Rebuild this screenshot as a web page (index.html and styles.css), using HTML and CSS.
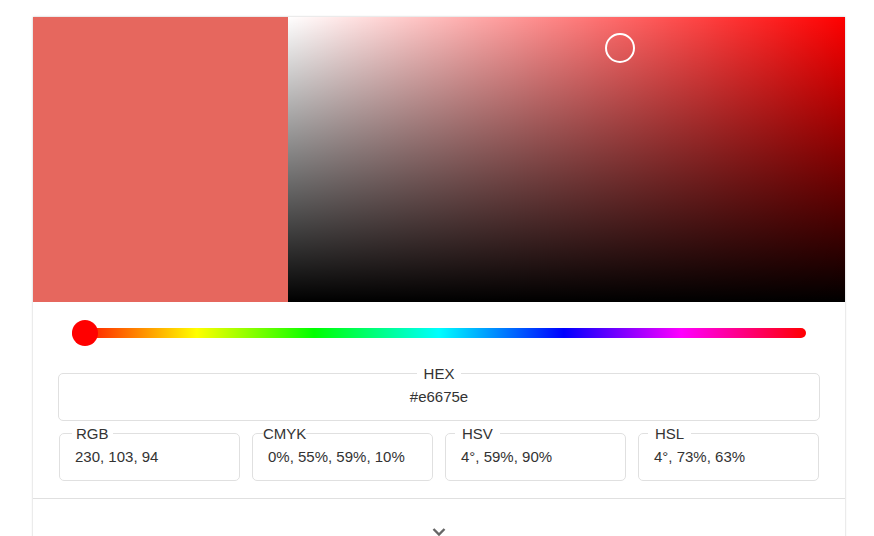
FILE: index.html
```html
<!DOCTYPE html>
<html lang="en">
<head>
    <meta charset="UTF-8">
    <meta name="viewport" content="width=device-width, initial-scale=1.0">
    <title>Color Picker</title>
    <link rel="stylesheet" href="styles.css">
</head>
<body>
    <div class="picker">
        <div class="picker-top">
            <div class="swatch"></div>
            <div class="sv-area">
                <span class="sv-cursor"></span>
            </div>
        </div>

        <div class="hue-row">
            <div class="hue-track">
                <span class="hue-thumb"></span>
            </div>
        </div>

        <div class="fields">
            <fieldset class="field field-hex">
                <legend>HEX</legend>
                <div class="field-value">#e6675e</div>
            </fieldset>

            <div class="field-row">
                <fieldset class="field">
                    <legend>RGB</legend>
                    <div class="field-value">230, 103, 94</div>
                </fieldset>
                <fieldset class="field">
                    <legend class="tight">CMYK</legend>
                    <div class="field-value">0%, 55%, 59%, 10%</div>
                </fieldset>
                <fieldset class="field">
                    <legend class="wide">HSV</legend>
                    <div class="field-value">4°, 59%, 90%</div>
                </fieldset>
                <fieldset class="field">
                    <legend class="wide">HSL</legend>
                    <div class="field-value">4°, 73%, 63%</div>
                </fieldset>
            </div>
        </div>

        <div class="expand">
            <svg width="14" height="10" viewBox="0 0 14 10">
                <polyline points="1.5,2 7,7.5 12.5,2" fill="none" stroke="#666" stroke-width="2.4"/>
            </svg>
        </div>
    </div>
</body>
</html>
```

FILE: styles.css
```css
body {
    margin: 0;
    font-family: 'Liberation Sans', Arial, sans-serif;
    color: #333;
    background: #fff;
}

.picker {
    width: 812px;
    margin: 17px 0 0 33px;
    background: #fff;
    box-shadow: 0 0 2px rgba(0, 0, 0, 0.25);
}

.picker-top {
    display: flex;
    height: 285px;
}

.swatch {
    width: 255px;
    background: #e6675e;
}

.sv-area {
    flex: 1;
    position: relative;
    background:
        linear-gradient(to top, #000, rgba(0, 0, 0, 0)),
        linear-gradient(to right, #fff, rgba(255, 255, 255, 0)),
        #ff0000;
}

.sv-cursor {
    position: absolute;
    left: 317px;
    top: 16px;
    width: 26px;
    height: 26px;
    border: 2px solid #fff;
    border-radius: 50%;
}

.hue-row {
    padding: 26px 39px 0;
}

.hue-track {
    position: relative;
    height: 10px;
    border-radius: 5px;
    background: linear-gradient(to right,
        #ff0000 0%, #ffff00 17%, #00ff00 33%, #00ffff 50%,
        #0000ff 67%, #ff00ff 83%, #ff0000 100%);
}

.hue-thumb {
    position: absolute;
    left: 0;
    top: -8px;
    width: 26px;
    height: 26px;
    border-radius: 50%;
    background: #ff0000;
}

.fields {
    padding: 27px 25px 0;
}

.field {
    margin: 0;
    padding: 6px 15px 15px;
    border: 1px solid #e0e0e0;
    border-radius: 5px;
    min-width: 0;
}

.field legend {
    padding: 0 4px;
    margin-left: -3px;
    font-size: 15px;
    line-height: 17px;
}

.field legend.tight {
    padding: 0;
    margin-left: -5px;
}

.field legend.wide {
    padding: 0 7px;
    margin-left: -6px;
}

.field-value {
    font-size: 15px;
    line-height: 17px;
}

.field-hex {
    text-align: center;
}

.field-hex legend {
    width: 44px;
    padding: 0;
    margin: 0 auto;
}

.field-row {
    display: grid;
    grid-template-columns: repeat(4, 1fr);
    gap: 12px;
    margin-top: 4px;
    padding: 0 1px;
}

.expand {
    margin-top: 17px;
    border-top: 1px solid #e0e0e0;
    padding-top: 24px;
    height: 60px;
    text-align: center;
}

.expand svg {
    display: inline-block;
}
```
